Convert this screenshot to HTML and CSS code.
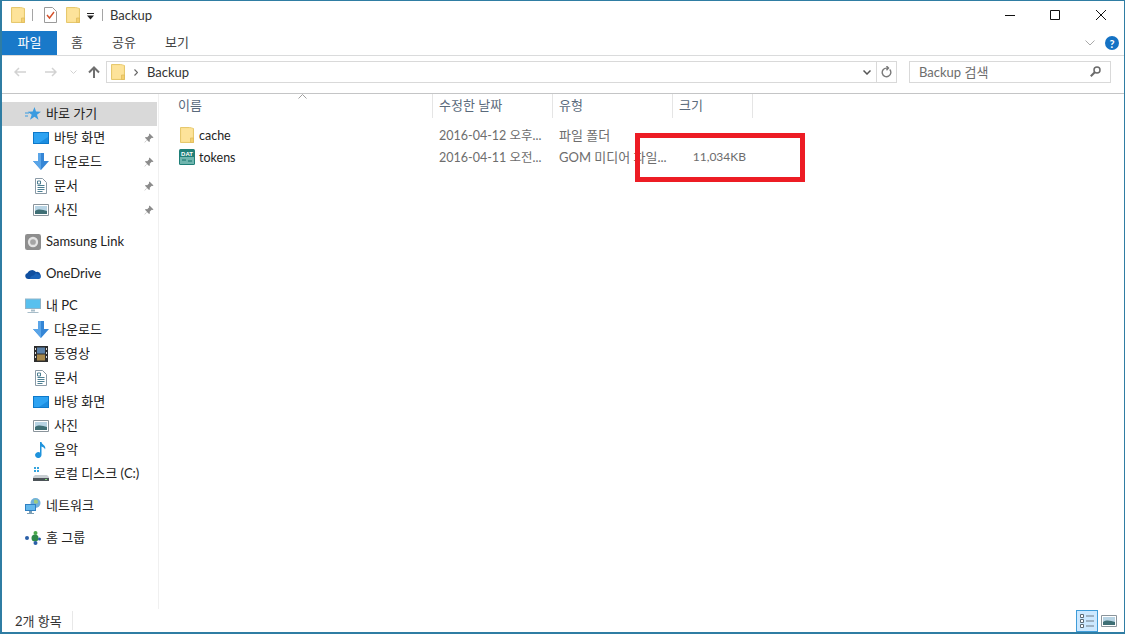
FILE: index.html
```html
<!DOCTYPE html>
<html lang="ko">
<head>
    <meta charset="UTF-8">
    <title>Backup</title>
    <link rel="stylesheet" href="styles.css">
</head>
<body>
    <svg class="defs" width="0" height="0">
        <symbol id="i-folder" viewBox="0 0 14 16">
            <path d="M.5.5h9l4 1v14H.5z" fill="#fbe08c" stroke="#e6c86e"/>
            <path d="M1.500 1.500h11v13h-11z" fill="#fde39a"/>
            <path d="M10.500 11h3v4.500h-3z" fill="#f4d06f" stroke="#dcb95a" stroke-width=".7"/>
        </symbol>
        <symbol id="i-desktop" viewBox="0 0 16 14">
            <path d="M0 1h16v12H0z" fill="#0d78c9"/>
            <path d="M1 2h14v10H1z" fill="#2ea3f2"/>
            <path d="M6 12l9-6v6z" fill="#1c8de0"/>
        </symbol>
        <symbol id="i-down" viewBox="0 0 16 18">
            <path d="M5 0h6v8h5l-8 9-8-9h5z" fill="#3586d6"/>
            <path d="M5 0h3v17l-8-9h5z" fill="#5aa5e8"/>
        </symbol>
        <symbol id="i-doc" viewBox="0 0 12 16">
            <path d="M.5.5h7l4 4v11H.5z" fill="#fff" stroke="#8a9aa6"/>
            <path d="M2.500 3h3v3h-3zM2.500 7.500h7M2.500 9.500h7M2.500 11.500h7M2.500 13.500h5" fill="none" stroke="#4d7f92"/>
        </symbol>
        <symbol id="i-photo" viewBox="0 0 16 12">
            <path d="M.5.5h15v11H.5z" fill="#fff" stroke="#8a949b"/>
            <path d="M2 2h12v8H2z" fill="#b8d4e4"/>
            <path d="M2 7c4-3 8-1 12 0v3H2z" fill="#3f6f75"/>
        </symbol>
        <symbol id="i-pin" viewBox="0 0 10 10">
            <path d="M5.500.5l4 4-1 .6-.8-.3-2 2 .2 1.500-.8.700L3 6.900.8 9.500.5 9.200 3 6.800 1 4.800l.7-.8 1.500.2 2-2-.3-.8z" fill="#8b8b8b"/>
        </symbol>
    </svg>

    <div class="window">
        <header class="titlebar">
            <div class="qat">
                <svg class="ico-folder"><use href="#i-folder"/></svg>
                <span class="qat-sep qat-sep-a"></span>
                <svg class="qat-check" viewBox="0 0 13 16" width="13" height="16">
                    <path d="M.5.5h8l4 4v11H.5z" fill="#fff" stroke="#9a9a9a"/>
                    <path d="M3 8l2.500 3L10 5" fill="none" stroke="#d4502a" stroke-width="1.400"/>
                </svg>
                <svg class="ico-folder qat-folder2"><use href="#i-folder"/></svg>
                <svg class="qat-drop" viewBox="0 0 7 7" width="7" height="7">
                    <path d="M0 0h7v1H0zM0 2.500h7L3.500 6.500z" fill="#222"/>
                </svg>
                <span class="qat-sep qat-sep-b"></span>
            </div>
            <span class="title-text">Backup</span>
            <div class="winbtns">
                <svg viewBox="0 0 10 10" width="10" height="10"><path d="M0 5.500h10" stroke="#111" fill="none"/></svg>
                <svg viewBox="0 0 10 10" width="10" height="10"><path d="M.5.500h9v9h-9z" stroke="#111" fill="none"/></svg>
                <svg class="win-close" viewBox="0 0 10 10" width="10" height="10"><path d="M0 0l10 10M10 0L0 10" stroke="#111" fill="none"/></svg>
            </div>
        </header>

        <nav class="ribbon">
            <span class="tab tab-file">파일</span>
            <span class="tab tab-home">홈</span>
            <span class="tab tab-share">공유</span>
            <span class="tab tab-view">보기</span>
            <svg class="ribbon-fold" viewBox="0 0 10 6" width="10" height="6"><path d="M.5.500L5 5 9.500.500" fill="none" stroke="#a9a9a9"/></svg>
            <span class="help">?</span>
        </nav>

        <div class="addressbar">
            <svg class="nav-arrow" viewBox="0 0 12 10" width="12" height="10"><path d="M12 5H1M5 1L1 5l4 4" fill="none" stroke="#d2d2d2" stroke-width="1.500"/></svg>
            <svg class="nav-arrow nav-fwd" viewBox="0 0 12 10" width="12" height="10"><path d="M0 5h11M7 1l4 4-4 4" fill="none" stroke="#d2d2d2" stroke-width="1.500"/></svg>
            <svg class="nav-recent" viewBox="0 0 7 4" width="7" height="4"><path d="M.5.500l3 3 3-3" fill="none" stroke="#d2d2d2"/></svg>
            <svg class="nav-up" viewBox="0 0 12 12" width="12" height="12"><path d="M6 12V1.500M1 6.500l5-5 5 5" fill="none" stroke="#6f6f6f" stroke-width="2"/></svg>
            <div class="path">
                <svg class="ico-folder"><use href="#i-folder"/></svg>
                <svg class="crumb-sep" viewBox="0 0 4 7" width="4" height="7"><path d="M.5.500l3 3-3 3" fill="none" stroke="#666" stroke-width="1.200"/></svg>
                <span class="crumb">Backup</span>
                <svg class="path-drop" viewBox="0 0 8 5" width="8" height="5"><path d="M.5.500L4 4 7.500.500" fill="none" stroke="#555" stroke-width="1.500"/></svg>
                <span class="path-refresh">
                    <svg viewBox="0 0 11 12" width="11" height="12"><path d="M8.700 3.500a4.300 4.300 0 1 1-3.200-1.400H7M5.500 0l2 2.100-2 2.100" fill="none" stroke="#7a7a7a" stroke-width="1.400"/></svg>
                </span>
            </div>
            <div class="search">
                <span>Backup 검색</span>
                <svg viewBox="0 0 11 11" width="11" height="11"><circle cx="7" cy="4" r="3" fill="none" stroke="#6a6a6a" stroke-width="1.500"/><path d="M4.800 6.200L.8 10.200" stroke="#6a6a6a" stroke-width="2"/></svg>
            </div>
        </div>

        <div class="main">
            <aside class="sidebar">
                <div class="nav-group">
                    <div class="nav-row top selected">
                        <svg class="nav-ico" viewBox="0 0 16 16"><path d="M9.500 1l1.500 4.500 5 .2-4 3 1.500 5-4-3-4.500 3 1.700-5-4-3 5-.2z" fill="#3a9be0"/><path d="M0 7h4M0 10h3" stroke="#3a9be0"/></svg>
                        <span>바로 가기</span>
                    </div>
                    <div class="nav-row sub">
                        <svg class="nav-ico"><use href="#i-desktop"/></svg><span>바탕 화면</span>
                        <svg class="pin"><use href="#i-pin"/></svg>
                    </div>
                    <div class="nav-row sub">
                        <svg class="nav-ico nav-ico-tall"><use href="#i-down"/></svg><span>다운로드</span>
                        <svg class="pin"><use href="#i-pin"/></svg>
                    </div>
                    <div class="nav-row sub">
                        <svg class="nav-ico"><use href="#i-doc"/></svg><span>문서</span>
                        <svg class="pin"><use href="#i-pin"/></svg>
                    </div>
                    <div class="nav-row sub">
                        <svg class="nav-ico"><use href="#i-photo"/></svg><span>사진</span>
                        <svg class="pin"><use href="#i-pin"/></svg>
                    </div>
                </div>
                <div class="nav-group">
                    <div class="nav-row top">
                        <svg class="nav-ico" viewBox="0 0 14 14"><rect width="14" height="14" rx="2" fill="#8e8e8e"/><circle cx="7" cy="7" r="4.500" fill="#e4e4e4"/><circle cx="7" cy="7" r="2.500" fill="#a5a5a5"/></svg>
                        <span>Samsung Link</span>
                    </div>
                </div>
                <div class="nav-group">
                    <div class="nav-row top">
                        <svg class="nav-ico" viewBox="0 0 16 10"><path d="M3 10a3 3 0 0 1-.5-5.900A5 5 0 0 1 11 3a3.500 3.500 0 0 1 2 7z" fill="#0f4fa0"/><path d="M5 10c0-2 1.500-3.500 3.500-3.500L11 4l2 1.500a2.300 2.300 0 0 1 1 4.500z" fill="#1b63b8"/></svg>
                        <span>OneDrive</span>
                    </div>
                </div>
                <div class="nav-group">
                    <div class="nav-row top">
                        <svg class="nav-ico" viewBox="0 0 16 15"><path d="M0 0h16v10.500H0z" fill="#8fb4c9"/><path d="M1 1h14v8.500H1z" fill="#58c0ee"/><path d="M6 11h4v2H6zM2.500 13.500h11v1h-11z" fill="#a8bdc9"/></svg>
                        <span>내 PC</span>
                    </div>
                    <div class="nav-row sub"><svg class="nav-ico nav-ico-tall"><use href="#i-down"/></svg><span>다운로드</span></div>
                    <div class="nav-row sub">
                        <svg class="nav-ico" viewBox="0 0 14 16"><path d="M0 0h14v16H0z" fill="#2d2d2d"/><path d="M3 1.500h8v6H3z" fill="#5a80a8"/><path d="M3 8.500h8v6H3z" fill="#a8884a"/><path d="M1 2h1v2H1zM1 6h1v2H1zM1 10h1v2H1zM12 2h1v2h-1zM12 6h1v2h-1zM12 10h1v2h-1z" fill="#ddd"/></svg>
                        <span>동영상</span>
                    </div>
                    <div class="nav-row sub"><svg class="nav-ico"><use href="#i-doc"/></svg><span>문서</span></div>
                    <div class="nav-row sub"><svg class="nav-ico"><use href="#i-desktop"/></svg><span>바탕 화면</span></div>
                    <div class="nav-row sub"><svg class="nav-ico"><use href="#i-photo"/></svg><span>사진</span></div>
                    <div class="nav-row sub">
                        <svg class="nav-ico" viewBox="0 0 12 16"><path d="M5 0h1.500c.5 3 5 3.500 3.500 7.500C9.500 5.500 8 5 6.500 4.500V13a3.200 3 0 1 1-1.500-2.500z" fill="#1f93dc"/></svg>
                        <span>음악</span>
                    </div>
                    <div class="nav-row sub">
                        <svg class="nav-ico" viewBox="0 0 16 14"><path d="M1 0h2v2H1zM4 0h2v2H4zM1 3h2v2H1zM4 3h2v2H4z" fill="#35a4dd"/><path d="M2 8h12l2 2v4H0v-4z" fill="#c8ced2"/><path d="M0 11h16v3H0z" fill="#4c5358"/><path d="M12 12h2v1h-2z" fill="#7ee07a"/></svg>
                        <span>로컬 디스크 (C:)</span>
                    </div>
                </div>
                <div class="nav-group">
                    <div class="nav-row top">
                        <svg class="nav-ico" viewBox="0 0 16 16"><circle cx="10.500" cy="5" r="5" fill="#6fb0dc"/><path d="M9 2c2-1 4 0 4 2s-3 2-4 1z" fill="#9ecb80"/><path d="M0 6h11v7H0z" fill="#2f80c2"/><path d="M1 7h9v5H1z" fill="#63b8ec"/><path d="M4 13h3v2H4zM2 15h7v1H2z" fill="#7c9fb5"/></svg>
                        <span>네트워크</span>
                    </div>
                </div>
                <div class="nav-group">
                    <div class="nav-row top">
                        <svg class="nav-ico" viewBox="0 0 16 14"><circle cx="2" cy="7" r="2" fill="#2a5fa8"/><circle cx="10" cy="7" r="3.500" fill="#2f8a4a"/><circle cx="10.500" cy="2" r="2" fill="#4aa84a"/><circle cx="10.500" cy="12" r="2" fill="#2a5fa8"/><circle cx="14.500" cy="8" r="1.500" fill="#2a5fa8"/></svg>
                        <span>홈 그룹</span>
                    </div>
                </div>
            </aside>

            <section class="files">
                <div class="file-head">
                    <span class="col col-name">이름</span>
                    <span class="col col-date">수정한 날짜</span>
                    <span class="col col-type">유형</span>
                    <span class="col col-size">크기</span>
                    <svg class="sort-caret" viewBox="0 0 9 5" width="9" height="5"><path d="M.5 4.500l4-4 4 4" fill="none" stroke="#a0a0a0"/></svg>
                </div>
                <div class="file-row">
                    <span class="cell-name">
                        <span class="file-ico"><svg class="ico-folder"><use href="#i-folder"/></svg></span>cache
                    </span>
                    <span class="cell cell-date">2016-04-12 오후...</span>
                    <span class="cell">파일 폴더</span>
                    <span class="cell"></span>
                </div>
                <div class="file-row">
                    <span class="cell-name">
                        <span class="file-ico">
                            <svg viewBox="0 0 16 16" width="16" height="16">
                                <rect width="16" height="16" rx="1.500" fill="#1f7f78"/>
                                <rect x="1" y="8" width="14" height="7" fill="#6fb5ae"/>
                                <path d="M3 10h4v2H3zM9 11h4v2H9z" fill="#3f938c"/>
                                <text class="dat-label" x="8" y="7">DAT</text>
                            </svg>
                        </span>tokens
                    </span>
                    <span class="cell cell-date">2016-04-11 오전...</span>
                    <span class="cell">GOM 미디어 파일...</span>
                    <span class="cell cell-size">11,034KB</span>
                </div>
                <div class="highlight-box"></div>
            </section>
        </div>

        <footer class="statusbar">
            <span class="count">2개 항목</span>
            <div class="views">
                <span class="view-btn active">
                    <svg viewBox="0 0 16 16" width="16" height="16"><path d="M1.500 1.500h3v3h-3zM1.500 6.500h3v3h-3zM1.500 11.500h3v3h-3z" fill="#fff" stroke="#5d6a75"/><path d="M7 3h8M7 8h8M7 13h8" stroke="#6f7b86"/></svg>
                </span>
                <span class="view-btn">
                    <svg class="ico-large"><use href="#i-photo"/></svg>
                </span>
            </div>
        </footer>
    </div>
</body>
</html>
```

FILE: styles.css
```css
* {
    box-sizing: border-box;
    margin: 0;
    padding: 0;
}

html,
body {
    width: 100%;
    height: 100%;
    overflow: hidden;
    background: #fff;
}

body {
    font-family: Lato, "Noto Sans CJK KR", sans-serif;
    font-size: 13px;
    color: #1e1e1e;
}

svg {
    display: block;
    flex: none;
}

.defs {
    position: absolute;
}

.window {
    display: flex;
    flex-direction: column;
    width: 1125px;
    height: 634px;
    border: 1px solid #2f7da3;
    border-left-width: 2px;
    border-bottom-width: 2px;
}

.ico-folder {
    width: 14px;
    height: 16px;
}

/* title bar */
.titlebar {
    display: flex;
    align-items: center;
    height: 30px;
    padding-left: 9px;
    padding-bottom: 2px;
}

.qat {
    display: flex;
    align-items: center;
}

.qat-sep {
    width: 1px;
    height: 12px;
    background: #a5a5a5;
}

.qat-sep-a {
    margin: 0 11px 0 7px;
}

.qat-check {
    margin-right: 9px;
}

.qat-drop {
    margin: 2px 0 0 7px;
}

.qat-sep-b {
    margin: 0 7px 0 8px;
}

.title-text {
    color: #333;
}

.winbtns {
    display: flex;
    gap: 35px;
    margin-left: auto;
    padding-right: 18px;
}

.win-close {
    margin-left: 1px;
}

/* ribbon */
.ribbon {
    display: flex;
    align-items: center;
    height: 25px;
    border-bottom: 1px solid #dadbdc;
    color: #444;
}

.tab {
    display: flex;
    align-items: center;
    justify-content: center;
    height: 24px;
    padding-bottom: 3px;
}

.tab-file {
    width: 55px;
    background: #1979c9;
    color: #fff;
}

.tab-home {
    width: 40px;
}

.tab-share {
    width: 54px;
}

.tab-view {
    width: 52px;
}

.ribbon-fold {
    margin-left: auto;
    margin-right: -1px;
}

.help {
    display: flex;
    align-items: center;
    justify-content: center;
    width: 14px;
    height: 14px;
    margin: 0 5px 0 11px;
    border-radius: 50%;
    background: #1572c4;
    color: #fff;
    font-size: 11px;
    font-weight: 700;
}

/* address row */
.addressbar {
    display: flex;
    align-items: center;
    height: 38px;
    padding-left: 12px;
    padding-bottom: 5px;
    border-bottom: 1px solid #c4c5c6;
}

.nav-fwd {
    margin-left: 19px;
}

.nav-recent {
    margin-left: 13px;
}

.nav-up {
    margin: 0 6px 0 11px;
}

.path {
    display: flex;
    align-items: center;
    width: 791px;
    height: 22px;
    margin-right: 12px;
    padding-left: 4px;
    border: 1px solid #d9d9d9;
}

.crumb-sep {
    margin-left: 9px;
}

.crumb {
    margin-left: 9px;
    color: #333;
}

.path-drop {
    margin-left: auto;
    margin-right: 5px;
}

.path-refresh {
    display: flex;
    align-items: center;
    justify-content: center;
    width: 20px;
    height: 20px;
    border-left: 1px solid #d9d9d9;
}

.search {
    display: flex;
    align-items: center;
    justify-content: space-between;
    width: 202px;
    height: 22px;
    padding: 0 9px 2px;
    border: 1px solid #d9d9d9;
    color: #6d6d6d;
}

/* navigation pane */
.main {
    display: flex;
    flex: 1;
    min-height: 0;
}

.sidebar {
    width: 157px;
    padding-top: 8px;
    border-right: 1px solid #f0f0f0;
    color: #222;
}

.nav-group {
    margin-bottom: 8px;
}

.nav-row {
    display: flex;
    align-items: center;
    height: 24px;
    width: 155px;
}

.nav-row span {
    padding-bottom: 3px;
}

.nav-row.top {
    padding-left: 23px;
}

.nav-row.sub {
    padding-left: 31px;
}

.nav-row.selected {
    background: #d9d9d9;
}

.nav-ico {
    width: 16px;
    height: 16px;
    margin-right: 5px;
}

.nav-ico-tall {
    height: 18px;
}

.pin {
    width: 10px;
    height: 10px;
    margin-left: auto;
    margin-right: 3px;
}

/* file list */
.files {
    position: relative;
    flex: 1;
}

.file-head,
.file-row {
    display: grid;
    grid-template-columns: 274px 120px 120px 80px;
}

.file-head {
    position: relative;
    height: 24px;
    margin-bottom: 6px;
    color: #5a6a7c;
}

.col {
    display: flex;
    align-items: center;
    padding-left: 6px;
    padding-bottom: 3px;
    border-right: 1px solid #e5e5e5;
}

.col-name {
    padding-left: 19px;
}

.sort-caret {
    position: absolute;
    left: 139px;
    top: 0;
}

.file-row {
    align-items: center;
    height: 22px;
    color: #6d6d6d;
}

.cell {
    padding-left: 6px;
    padding-bottom: 2px;
    white-space: nowrap;
}

.cell-date {
    font-size: 12.500px;
}

.cell-name {
    display: flex;
    align-items: center;
    gap: 4px;
    padding-left: 20px;
    font-size: 12.500px;
    color: #1e1e1e;
}

.file-ico {
    display: flex;
    justify-content: center;
    width: 16px;
}

.dat-label {
    font-family: "Liberation Sans", sans-serif;
    font-size: 6px;
    font-weight: 700;
    fill: #fff;
    text-anchor: middle;
}

.cell-size {
    padding-left: 0;
    padding-right: 7px;
    text-align: right;
    font-size: 12px;
}

.highlight-box {
    position: absolute;
    left: 476px;
    top: 39px;
    width: 170px;
    height: 49px;
    border: 5px solid #ed1c24;
}

/* status bar */
.statusbar {
    display: flex;
    align-items: center;
    height: 23px;
    padding-left: 13px;
    color: #333;
}

.count {
    padding-right: 10px;
    border-right: 1px solid #e8e8e8;
}

.views {
    display: flex;
    align-items: center;
    margin-left: auto;
    padding-right: 5px;
}

.view-btn {
    display: flex;
    align-items: center;
    justify-content: center;
    width: 21px;
    height: 22px;
}

.view-btn.active {
    width: 22px;
    background: #cce8ff;
    border: 1px solid #3f9cd8;
}

.ico-large {
    width: 16px;
    height: 12px;
}
```
